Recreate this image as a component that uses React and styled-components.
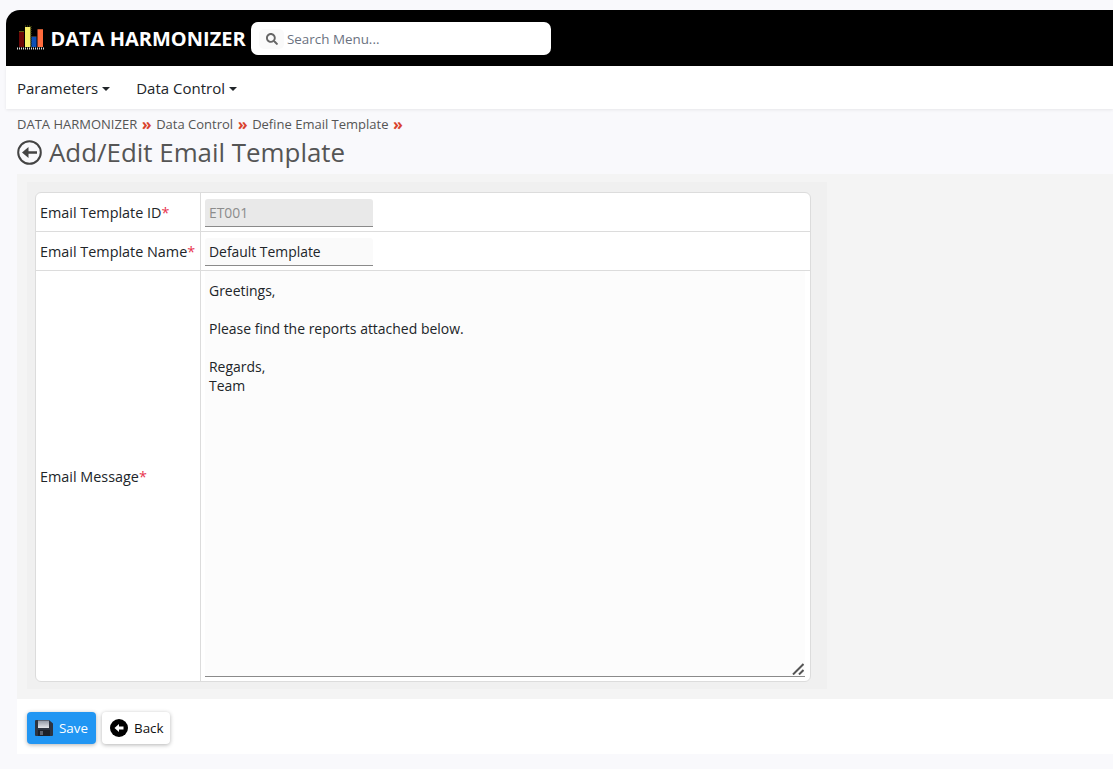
import styled, { createGlobalStyle } from "styled-components";
import { FaSearch } from "react-icons/fa";

const GlobalStyle = createGlobalStyle`
    html, body {
        margin: 0;
        padding: 0;
        background: #f9f9fc;
        overflow: hidden;
    }
    * {
        box-sizing: border-box;
    }
`
const Page = styled.div`
    width: 1113px;
    height: 769px;
    padding: 10px 0 0 6px;
    font-family: "Open Sans", sans-serif;
    font-size: 14px;
    color: #212529;
    overflow: hidden;
`
const Header = styled.header`
    height: 56px;
    background: #000;
    border-top-left-radius: 14px;
    display: flex;
    align-items: center;
    padding-left: 11px;
`
const Brand = styled.div`
    display: flex;
    align-items: center;
    gap: 3.5px;
    width: 234px;
    color: #fff;
    font-size: 20px;
    font-weight: 700;
    white-space: nowrap;
`
const SearchBox = styled.div`
    width: 300px;
    height: 33px;
    background: #fff;
    border-radius: 7px;
    display: flex;
    align-items: center;
    padding: 1px 0 0 8px;
    color: #6b7280;
    font-size: 13.4px;
`
const SearchIcon = styled.span`
    width: 25px;
    height: 20px;
    margin-right: 3px;
    border-radius: 5px;
    background: #fafafa;
    display: flex;
    align-items: center;
    justify-content: center;
    color: #666;
    font-size: 12px;
`
const NavBar = styled.nav`
    height: 43px;
    background: #fff;
    display: flex;
    align-items: center;
    padding: 1px 0 0 11px;
    gap: 26px;
    box-shadow: 0 1px 3px rgba(0, 0, 0, 0.08);
`
const NavItem = styled.div`
    font-size: 15px;
    color: #212529;
    display: flex;
    align-items: center;
    gap: 4px;
    &::after {
        content: "";
        margin-top: 2px;
        border-top: 4px solid #212529;
        border-left: 4px solid transparent;
        border-right: 4px solid transparent;
    }
`
const Crumbs = styled.div`
    display: flex;
    align-items: center;
    gap: 4.6px;
    margin: 7px 0 0 11px;
    height: 16px;
    font-size: 13px;
    color: #555;
`
const Chevrons = styled.span`
    color: #d9432f;
    font-weight: 700;
    font-size: 16px;
    line-height: 16px;
`
const TitleRow = styled.div`
    display: flex;
    align-items: center;
    gap: 7px;
    margin: 2px 0 0 11px;
    height: 36px;
`
const Title = styled.h1`
    margin: 0;
    font-size: 25.9px;
    font-weight: 400;
    color: #555;
`
const Panel = styled.section`
    margin: 4px 0 0 11px;
    height: 525px;
    background: #f4f4f4;
    padding: 8px 0 10px 10px;
`
const Inner = styled.div`
    width: 800px;
    height: 507px;
    background: #f0f0f0;
    padding: 10px 16px 7px 8px;
`
const Card = styled.div`
    height: 490px;
    background: #fff;
    border: 1px solid #dcdcdc;
    border-radius: 6px;
    display: flex;
    flex-direction: column;
    overflow: hidden;
`
const Row = styled.div`
    display: flex;
    height: ${(p) => p.$height || "auto"};
    flex: ${(p) => (p.$grow ? 1 : "none")};
    border-bottom: ${(p) => (p.$grow ? "none" : "1px solid #dcdcdc")};
`
const Label = styled.label`
    width: 165px;
    flex: none;
    padding-left: 4px;
    display: flex;
    align-items: center;
    border-right: 1px solid #dcdcdc;
    color: #212529;
    font-size: 14.4px;
`
const Required = styled.span`
    color: #e8344e;
`
const Cell = styled.div`
    flex: 1;
    position: relative;
    padding: ${(p) => (p.$area ? "0 5px 4px 4px" : "6px 0 0 4px")};
`
const Input = styled.input`
    display: block;
    width: 168px;
    height: 28px;
    padding: 0 4px;
    border: none;
    border-bottom: 1px solid #8a8a8a;
    border-radius: 3px 3px 0 0;
    background: ${(p) => (p.disabled ? "#e9e9e9" : "#fafafa")};
    color: ${(p) => (p.disabled ? "#8c8c8c" : "#212529")};
    font-family: inherit;
    font-size: 13.9px;
    outline: none;
    opacity: 1;
`
const Message = styled.textarea`
    display: block;
    width: 100%;
    height: 100%;
    padding: 10px 4px 0;
    border: none;
    border-bottom: 1px solid #8a8a8a;
    background: #fcfcfc;
    color: #212529;
    font-family: inherit;
    font-size: 13.97px;
    line-height: 19px;
    outline: none;
    resize: none;
`
const Grip = styled.svg`
    position: absolute;
    right: 6px;
    bottom: 6px;
`
const Footer = styled.footer`
    margin-left: 11px;
    height: 55px;
    background: #fff;
    display: flex;
    align-items: center;
    gap: 6px;
    padding: 3px 0 0 10px;
`
const Button = styled.button`
    width: ${(p) => (p.$primary ? "69px" : "68px")};
    height: 32px;
    display: flex;
    align-items: center;
    gap: 6px;
    padding: 0 0 0 8px;
    border: none;
    border-radius: 4px;
    background: ${(p) => (p.$primary ? "#2196f3" : "#fff")};
    color: ${(p) => (p.$primary ? "#fff" : "#111")};
    font-family: inherit;
    font-size: 13.4px;
    box-shadow: 0 1px 4px rgba(0, 0, 0, 0.3);
`

function Logo(){
    return(
        <svg width="30" height="26" viewBox="0 1 30 26">
            <rect x="2" y="8" width="5" height="15" fill="#6b0606" />
            <path d="M2 7.5H7" stroke="#5c5c10" />
            <rect x="8" y="3" width="5.5" height="20" fill="#f7ef6a" />
            <path d="M8 2H13.5M14 2V23" stroke="#5c5c10" strokeDasharray="1 1" />
            <rect x="14.5" y="13" width="5" height="10" fill="#0d4fb5" />
            <path d="M14.5 12.5H19.5" stroke="#333" />
            <rect x="20.5" y="6" width="5.5" height="17" fill="#ff6b3d" />
            <path d="M20.5 5.5H26" stroke="#c0552f" />
            <path d="M0 24.5H28" stroke="#ddd" strokeWidth="2" strokeDasharray="1 1" />
        </svg>
    )
}

function BackOutline(){
    return(
        <svg width="25" height="25" viewBox="0 0 25 25" fill="none">
            <circle cx="12.5" cy="12.5" r="11.3" stroke="#444" strokeWidth="2" />
            <path d="M20 11.2H11.5V7L5 12.5 11.5 18V13.8H20Z" fill="#444" />
        </svg>
    )
}

function BackSolid(){
    return(
        <svg width="18" height="18" viewBox="0 0 18 18">
            <circle cx="9" cy="9" r="9" fill="#000" />
            <path d="M13.5 7.5H9V5L4.5 9 9 13V10.5H13.5Z" fill="#fff" />
        </svg>
    )
}

function Floppy(){
    return(
        <svg width="18" height="16" viewBox="0 0 18 16">
            <defs>
                <linearGradient id="lid" x1="0" y1="0" x2="0" y2="1">
                    <stop offset="0" stopColor="#8f96a3" />
                    <stop offset="1" stopColor="#e4e6ea" />
                </linearGradient>
            </defs>
            <path d="M0 1a1 1 0 0 1 1-1h13l4 3.5V15a1 1 0 0 1-1 1H1a1 1 0 0 1-1-1Z" fill="#2d3440" />
            <rect x="3" y="0.5" width="11" height="7.5" fill="url(#lid)" />
            <rect x="3" y="10" width="12" height="6" fill="#1c2028" />
            <rect x="5" y="11" width="3" height="4" fill="#5b616c" />
        </svg>
    )
}

export default function App(){
    return(
        <Page>
            <GlobalStyle />
            <Header>
                <Brand><Logo />DATA HARMONIZER</Brand>
                <SearchBox><SearchIcon><FaSearch /></SearchIcon>Search Menu...</SearchBox>
            </Header>
            <NavBar>
                <NavItem>Parameters</NavItem>
                <NavItem>Data Control</NavItem>
            </NavBar>
            <Crumbs>
                DATA HARMONIZER <Chevrons>»</Chevrons> Data Control <Chevrons>»</Chevrons> Define Email Template <Chevrons>»</Chevrons>
            </Crumbs>
            <TitleRow>
                <BackOutline />
                <Title>Add/Edit Email Template</Title>
            </TitleRow>
            <Panel>
                <Inner>
                    <Card>
                        <Row $height="39px">
                            <Label>Email Template ID<Required>*</Required></Label>
                            <Cell><Input disabled value="ET001" readOnly /></Cell>
                        </Row>
                        <Row $height="39px">
                            <Label>Email Template Name<Required>*</Required></Label>
                            <Cell><Input value="Default Template" readOnly /></Cell>
                        </Row>
                        <Row $grow>
                            <Label>Email Message<Required>*</Required></Label>
                            <Cell $area>
                                <Message readOnly value={"Greetings,\n\nPlease find the reports attached below.\n\nRegards,\nTeam"} />
                                <Grip width="12" height="12" viewBox="0 0 12 12">
                                    <path d="M1 11.5 11.5 1M7 11.5 11.5 7" stroke="#555" strokeWidth="2" />
                                </Grip>
                            </Cell>
                        </Row>
                    </Card>
                </Inner>
            </Panel>
            <Footer>
                <Button $primary><Floppy />Save</Button>
                <Button><BackSolid />Back</Button>
            </Footer>
        </Page>
    )
}
